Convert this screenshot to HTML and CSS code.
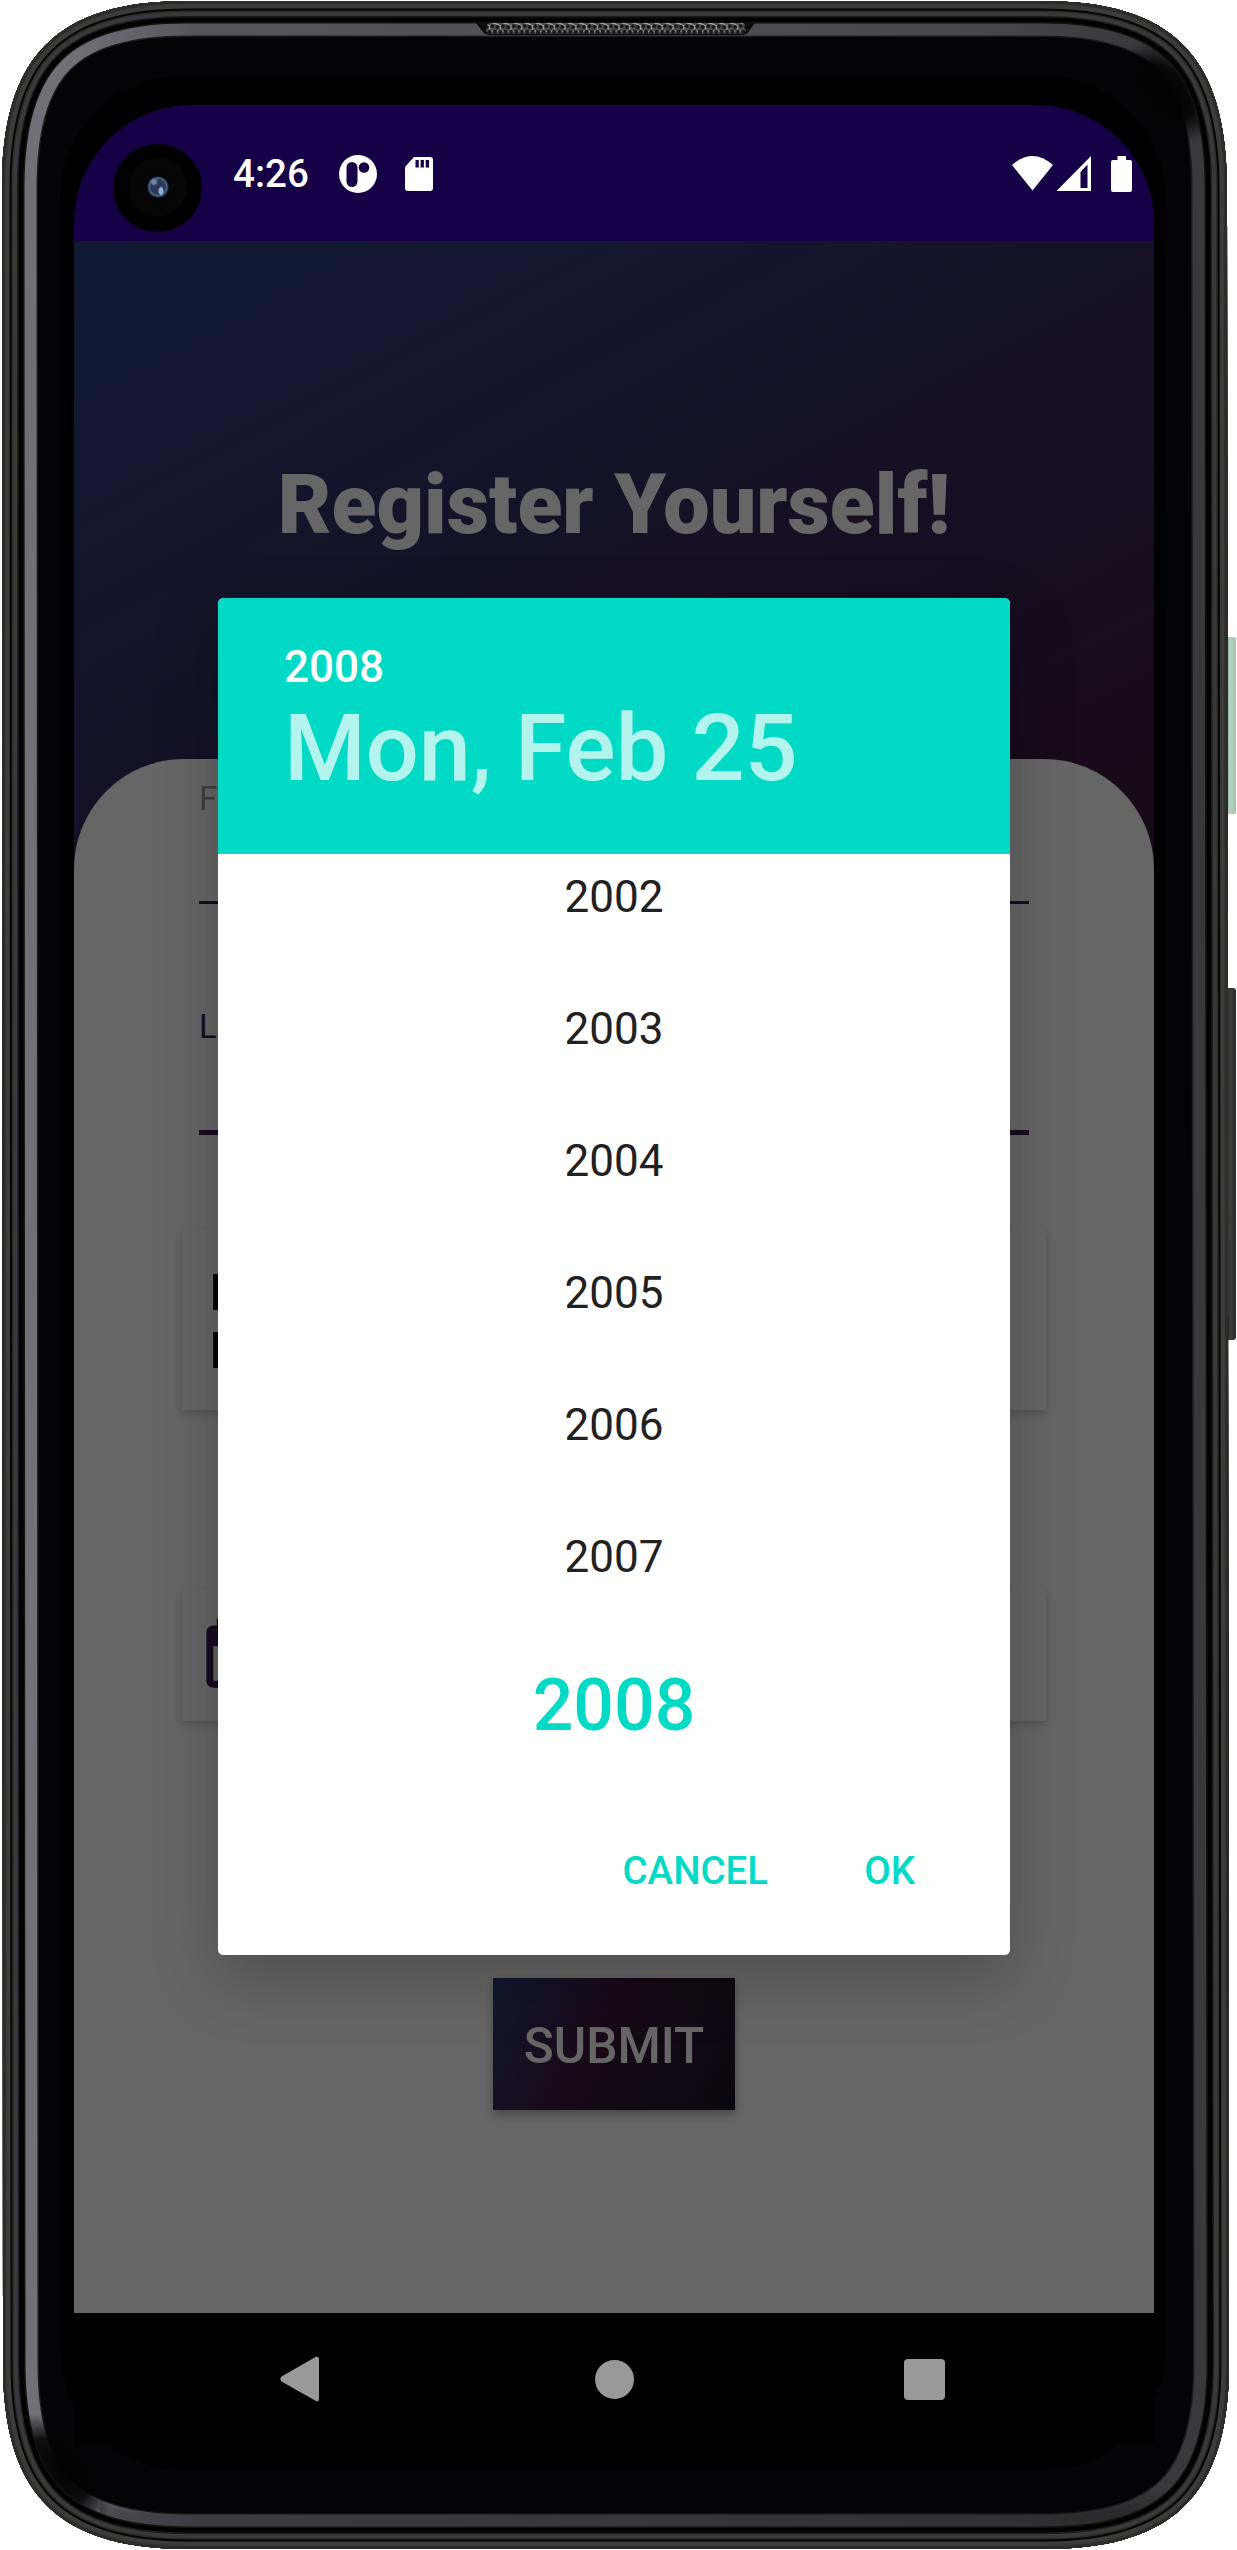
FILE: index.html
```html
<!DOCTYPE html>
<html lang="en">
<head>
<meta charset="utf-8">
<title>Register Yourself!</title>
<link rel="stylesheet" href="styles.css">
</head>
<body>
<div class="phone">
  <svg class="frame" viewBox="0 0 1237 2550" width="1237" height="2550" aria-hidden="true">
    <defs>
      <path id="body" d="M2 187C2 56 57 1 187 1H1042C1172 1 1227 56 1227 187L1229 2364C1229 2494 1174 2549 1044 2549H188C58 2549 3 2494 3 2364Z"/>
      <clipPath id="bodyClip"><use href="#body"/></clipPath>
      <linearGradient id="glow" gradientUnits="userSpaceOnUse" x1="0" y1="0" x2="1237" y2="0">
        <stop offset="0" stop-color="#716f78"/>
        <stop offset=".06" stop-color="#716f78"/>
        <stop offset=".16" stop-color="#56555b"/>
        <stop offset=".8" stop-color="#47464b"/>
        <stop offset=".92" stop-color="#39393b"/>
        <stop offset="1" stop-color="#39393b"/>
      </linearGradient>
      <linearGradient id="base" gradientUnits="userSpaceOnUse" x1="0" y1="2490" x2="0" y2="2550">
        <stop offset="0" stop-color="#000" stop-opacity="0"/>
        <stop offset=".4" stop-color="#000" stop-opacity=".3"/>
        <stop offset="1" stop-color="#000" stop-opacity=".3"/>
      </linearGradient>
      <radialGradient id="fade">
        <stop offset="0" stop-color="#020203"/>
        <stop offset=".55" stop-color="#020203" stop-opacity=".9"/>
        <stop offset="1" stop-color="#020203" stop-opacity="0"/>
      </radialGradient>
      <linearGradient id="power" x1="0" x2="1" y1="0" y2="0">
        <stop offset="0" stop-color="#7f9a89"/>
        <stop offset=".5" stop-color="#b3d2bf"/>
        <stop offset="1" stop-color="#a2c4b0"/>
      </linearGradient>
      <linearGradient id="volume" x1="0" x2="1" y1="0" y2="0">
        <stop offset="0" stop-color="#1c1c1c"/>
        <stop offset=".5" stop-color="#3c3c3d"/>
        <stop offset="1" stop-color="#2a2a2a"/>
      </linearGradient>
      <pattern id="mesh" patternUnits="userSpaceOnUse" x="484" y="23" width="10.8" height="12">
        <rect width="10.8" height="12" fill="#4c4c4c"/>
        <path d="M0 0L5.4 3L10.8 0M5.4 3V7M0 10L5.4 7L10.8 10" stroke="#a8a8a8" stroke-width="1.4" fill="none"/>
        <circle cx="2.7" cy="4" r="2" fill="#161616"/>
        <circle cx="8.1" cy="3" r="2" fill="#161616"/>
        <circle cx="5.4" cy="9" r="2.200" fill="#1a1a1a"/>
        <circle cx="0" cy="9" r="2.200" fill="#1a1a1a"/>
        <circle cx="10.8" cy="9" r="2.200" fill="#1a1a1a"/>
      </pattern>
    </defs>
    <rect x="1224" y="637" width="12" height="177" rx="2" fill="url(#power)"/>
    <rect x="1224" y="988" width="12" height="352" rx="3" fill="url(#volume)"/>
    <g clip-path="url(#bodyClip)">
      <use href="#body" fill="#040406"/>
      <g fill="none">
        <use href="#body" stroke="#1c1b1c" stroke-width="72"/>
        <use href="#body" stroke="url(#glow)" stroke-width="69"/>
        <rect x="100" y="2490" width="1137" height="60" fill="url(#base)"/>
        <ellipse cx="1168" cy="92" rx="34" ry="58" transform="rotate(-42 1168 92)" fill="url(#fade)"/>
        <ellipse cx="60" cy="2470" rx="36" ry="66" transform="rotate(-40 60 2470)" fill="url(#fade)"/>
        <use href="#body" stroke="#17110e" stroke-width="45"/>
        <use href="#body" stroke="#020202" stroke-width="42"/>
        <use href="#body" stroke="#1b1b1b" stroke-width="33"/>
        <use href="#body" stroke="#383938" stroke-width="30"/>
        <use href="#body" stroke="#2a2b2a" stroke-width="22"/>
        <use href="#body" stroke="#050505" stroke-width="19"/>
        <use href="#body" stroke="#3b3c39" stroke-width="15"/>
        <use href="#body" stroke="#2c2d2a" stroke-width="6"/>
      </g>
      <path d="M476 23H755L749 31Q747 35 741 35H491Q485 35 483 32Z" fill="#0c0c0c"/>
      <rect x="486" y="23" width="260" height="11" rx="5" fill="url(#mesh)"/>
    </g>
    <rect x="61" y="76" width="1104" height="2394" rx="120" fill="#000"/>
  </svg>

  <div class="screen">
    <header class="status">
      <div class="camera"></div>
      <span class="clock">4:26</span>
      <svg class="notice" viewBox="0 0 38 38" width="38" height="38"><circle cx="19" cy="19" r="19" fill="#fff"/><rect x="7.500" y="7" width="11" height="25" rx="5.500" fill="#160046"/><circle cx="25" cy="12.500" r="5.300" fill="#160046"/></svg>
      <svg class="sdcard" viewBox="0 0 28 34" width="28" height="34"><path d="M9 0H25Q28 0 28 3V31Q28 34 25 34H3Q0 34 0 31V10Z" fill="#fff"/><path d="M10.500 3h3.300v7.500h-3.300zM15.600 3h3.300v7.500h-3.300zM20.700 3H24v7.500h-3.300z" fill="#160046"/></svg>
      <svg class="radio" viewBox="0 0 120 36" width="120" height="36" fill="#fff">
        <path d="M0 9Q20.500-9 41 9L20.500 34.500Z"/>
        <path fill-rule="evenodd" d="M44.500 35L79 0V35ZM68.500 16V32H75.500V8.500Z"/>
        <path d="M105.500 0H114V4H118Q120 4 120 6V34Q120 36 118 36H101Q99 36 99 34V6Q99 4 101 4H105.500Z"/>
      </svg>
    </header>

    <main class="app">
      <h1 class="title">Register Yourself!</h1>
      <section class="sheet">
        <div class="field">F</div>
        <div class="field field-active">L</div>
        <div class="card card-choice"><span>D</span><span>B</span></div>
        <div class="card card-date">
          <svg viewBox="0 0 24 24" width="83" height="83" fill="#3e1f50"><path d="M19 3h-1V1h-2v2H8V1H6v2H5c-1.110 0-2 .9-2 2v14c0 1.100.89 2 2 2h14c1.100 0 2-.9 2-2V5c0-1.100-.9-2-2-2zm0 16H5V9h14v10z"/></svg>
        </div>
        <button class="submit">SUBMIT</button>
      </section>

      <div class="scrim">
        <div class="dialog">
          <div class="dialog-head">
            <div class="head-year">2008</div>
            <div class="head-date">Mon, Feb 25</div>
          </div>
          <ul class="years">
            <li>2002</li>
            <li>2003</li>
            <li>2004</li>
            <li>2005</li>
            <li>2006</li>
            <li>2007</li>
            <li class="selected">2008</li>
          </ul>
          <div class="actions">
            <span>CANCEL</span>
            <span>OK</span>
          </div>
        </div>
      </div>
    </main>

    <nav class="navbar">
      <svg viewBox="0 0 39 46" width="39" height="46"><path d="M36 .8Q39 0 39 3.500V42.500Q39 46 36 45L1.500 25.500Q-.8 23 1.500 20.500Z" fill="#999"/></svg>
      <span class="home"></span>
      <span class="recent"></span>
    </nav>
  </div>
</div>
</body>
</html>
```

FILE: styles.css
```css
* { box-sizing: border-box; }

body {
  margin: 0;
  background: #fff;
  font-family: Roboto, "Liberation Sans", sans-serif;
}

.phone {
  position: relative;
  width: 1237px;
  height: 2550px;
  padding: 105px 83px 105px 74px;
  overflow: hidden;
}

.frame {
  position: absolute;
  inset: 0;
}

.screen {
  position: relative;
  display: flex;
  flex-direction: column;
  width: 1080px;
  height: 2340px;
  border-radius: 118px 118px 0 0;
  overflow: hidden;
  background: #000;
}

/* Status bar */
.status {
  display: flex;
  align-items: center;
  height: 136px;
  padding: 2px 22px 0 39px;
  background: #160046;
  color: #fff;
}

.camera {
  width: 89px;
  height: 88px;
  margin-top: 28px;
  border-radius: 50%;
  background: radial-gradient(ellipse 3px 5px at 48px 47px, #8fb0da 0 60%, transparent), radial-gradient(ellipse 4px 4px at 41px 38px, #6f87a8 0 50%, transparent), radial-gradient(circle at 45px 43px, #2b3a55 0 7px, #4c6488 9px, #050507 11px, #060606 28px, #000 30px);
}

.clock {
  width: 93px;
  margin-left: 31px;
  font-size: 38.5px;
  font-weight: 500;
  line-height: 44px;
}

.notice { margin-left: 13px; }
.sdcard { margin-left: 28px; }
.radio { margin-left: auto; }

/* Registration form */
.app {
  position: relative;
  display: flex;
  flex-direction: column;
  height: 2072px;
  background: linear-gradient(152.5deg, #2a4384 0%, #3e1941 40%, #191626 100%);
}

.title {
  height: 518px;
  margin: 0;
  padding-top: 215px;
  font-size: 82.5px;
  font-weight: 900;
  line-height: 97px;
  text-align: center;
  color: #fff;
}

.sheet {
  display: flex;
  flex: 1;
  flex-direction: column;
  align-items: center;
  border-radius: 110px 110px 0 0;
  background: #fff;
}

.field {
  width: 830px;
  height: 145px;
  padding: 20px 0 0;
  border-bottom: 3px solid #3e1f50;
  font-size: 33px;
  line-height: 40px;
  color: #9c9c9c;
}

.field-active {
  height: 231px;
  padding-top: 103px;
  border-bottom-width: 5px;
  color: #3e1f50;
}

.card {
  width: 864px;
  background: #fff;
  box-shadow: 0 4px 9px rgba(0, 0, 0, .2);
}

.card-choice {
  display: flex;
  flex-direction: column;
  height: 181px;
  margin-top: 94px;
  padding: 35px 28px;
  font-size: 50px;
  font-weight: 700;
  line-height: 58px;
  color: #000;
}

.card-date {
  display: flex;
  align-items: center;
  height: 132px;
  margin-top: 179px;
  padding: 3px 14px 0;
}

.submit {
  width: 242px;
  height: 132px;
  margin-top: 257px;
  padding: 4px 0 0;
  border: 0;
  background: linear-gradient(118.600deg, #2a4074 0%, #401840 40%, #181626 100%);
  box-shadow: 0 5px 9px rgba(0, 0, 0, .3);
  font: 500 49.5px Roboto, "Liberation Sans", sans-serif;
  color: #fff;
}

/* Date picker dialog */
.scrim {
  position: absolute;
  inset: 0;
  display: flex;
  align-items: center;
  justify-content: center;
  padding-bottom: 1px;
  background: rgba(0, 0, 0, .6);
}

.dialog {
  display: flex;
  flex-direction: column;
  width: 792px;
  height: 1357px;
  border-radius: 5.5px;
  overflow: hidden;
  background: #fff;
  box-shadow: 0 24px 66px rgba(0, 0, 0, .24);
}

.dialog-head {
  height: 256px;
  padding: 43px 66px 0;
  background: #03dac5;
  color: #fff;
}

.head-year {
  font-size: 44px;
  font-weight: 500;
  line-height: 52px;
}

.head-date {
  font-size: 93.5px;
  font-weight: 500;
  line-height: 110px;
  color: rgba(255, 255, 255, .7);
}

.years {
  display: flex;
  flex-direction: column;
  height: 933px;
  margin: 0;
  padding: 0;
  overflow: hidden;
  list-style: none;
  font-size: 44px;
  line-height: 132px;
  text-align: center;
  color: #212121;
}

.years li { flex: none; height: 132px; }
.years li:first-child { margin-top: -23px; }

.years .selected {
  height: 165px;
  font-size: 71.500px;
  font-weight: 500;
  line-height: 165px;
  color: #03dac5;
}

.actions {
  display: flex;
  justify-content: flex-end;
  gap: 96px;
  padding: 61px 95px 0 0;
  font-size: 38.5px;
  font-weight: 500;
  line-height: 46px;
  color: #03dac5;
}

/* System navigation */
.navbar {
  display: flex;
  align-items: center;
  height: 132px;
  padding-left: 206px;
}

.home {
  width: 39px;
  height: 39px;
  margin-left: 276px;
  border-radius: 50%;
  background: #999;
}

.recent {
  width: 41px;
  height: 41px;
  margin-left: 270px;
  border-radius: 4px;
  background: #999;
}
```
